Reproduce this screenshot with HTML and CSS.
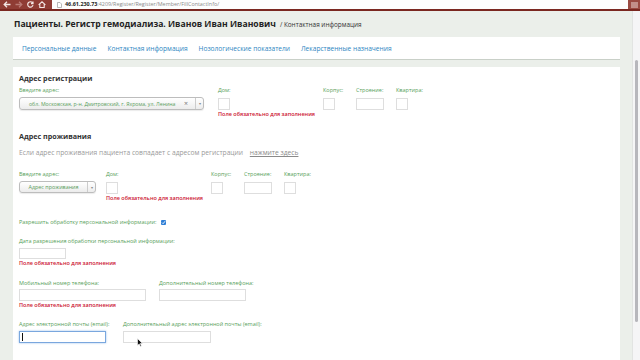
FILE: index.html
```html
<!DOCTYPE html>
<html lang="ru">
<head>
    <meta charset="UTF-8">
    <meta name="viewport" content="width=device-width, initial-scale=1.0">
    <title>Контактная информация</title>
    <link rel="stylesheet" href="styles.css">
</head>
<body>
    <!-- Browser toolbar -->
    <div class="chrome">
        <div class="chrome-nav">
            <svg width="8" height="7" viewBox="0 0 8 7"><path d="M7.5 3.5H1.5M4 0.8L1.2 3.5L4 6.2" fill="none" stroke="#f3e6e4" stroke-width="1.3"/></svg>
            <svg width="8" height="7" viewBox="0 0 8 7"><path d="M0.5 3.5H6.5M4 0.8L6.8 3.5L4 6.2" fill="none" stroke="#b97a74" stroke-width="1.3"/></svg>
            <svg width="7" height="7" viewBox="0 0 7 7"><path d="M5.8 2.2A2.7 2.7 0 1 0 6 4.2M6 0.6V2.6H4" fill="none" stroke="#f3e6e4" stroke-width="1.2"/></svg>
            <svg width="8" height="7" viewBox="0 0 8 7"><path d="M0.6 3.8L4 0.8L7.4 3.8M1.8 3V6.5H6.2V3" fill="none" stroke="#f3e6e4" stroke-width="1.1"/></svg>
        </div>
        <div class="omnibox">
            <svg class="page-icon" width="5" height="6" viewBox="0 0 5 6"><path d="M0.5 0.5H3L4.5 2V5.5H0.5Z" fill="#fff" stroke="#999" stroke-width="0.7"/></svg>
            <span class="host">46.61.230.73</span><span class="url-path">:4209/Register/Register/Member/FillContactInfo/</span>
        </div>
        <div class="chrome-menu">
            <svg width="7" height="6" viewBox="0 0 7 6"><path d="M0 1H7M0 3H7M0 5H7" stroke="#e9d3d0" stroke-width="1"/></svg>
        </div>
    </div>

    <div class="window">
        <div class="page">
            <header class="page-head">
                <h1>Пациенты. Регистр гемодиализа. Иванов Иван Иванович</h1>
                <span class="crumb">/ Контактная информация</span>
            </header>

            <nav class="tabs">
                <a href="#">Персональные данные</a>
                <a href="#">Контактная информация</a>
                <a href="#">Нозологические показатели</a>
                <a href="#">Лекарственные назначения</a>
            </nav>

            <main class="card">
                <h2 class="first">Адрес регистрации</h2>
                <div class="addr-row reg">
                    <div class="field">
                        <label>Введите адрес:</label>
                        <div class="select select-wide">
                            <span class="select-text">обл. Московская, р-н. Дмитровский, г. Яхрома, ул. Ленина</span>
                            <span class="select-clear">&times;</span>
                            <span class="select-arrow">&#9662;</span>
                        </div>
                    </div>
                    <div class="field">
                        <label>Дом:</label>
                        <div class="box box-sq"></div>
                        <span class="error">Поле обязательно для заполнения</span>
                    </div>
                    <div class="field">
                        <label>Корпус:</label>
                        <div class="box box-sq"></div>
                    </div>
                    <div class="field">
                        <label>Строение:</label>
                        <div class="box box-mid"></div>
                    </div>
                    <div class="field">
                        <label>Квартира:</label>
                        <div class="box box-sq"></div>
                    </div>
                </div>

                <h2 class="second">Адрес проживания</h2>
                <p class="hint">Если адрес проживания пациента совпадает с адресом регистрации <a href="#">нажмите здесь</a></p>
                <div class="addr-row live">
                    <div class="field">
                        <label>Введите адрес:</label>
                        <div class="select select-short">
                            <span class="select-text">Адрес проживания</span>
                            <span class="select-arrow">&#9662;</span>
                        </div>
                    </div>
                    <div class="field">
                        <label>Дом:</label>
                        <div class="box box-sq"></div>
                        <span class="error">Поле обязательно для заполнения</span>
                    </div>
                    <div class="field">
                        <label>Корпус:</label>
                        <div class="box box-sq"></div>
                    </div>
                    <div class="field">
                        <label>Строение:</label>
                        <div class="box box-mid"></div>
                    </div>
                    <div class="field">
                        <label>Квартира:</label>
                        <div class="box box-sq"></div>
                    </div>
                </div>

                <div class="consent">
                    <label>Разрешить обработку персональной информации:</label>
                    <span class="checkbox">
                        <svg width="5" height="5" viewBox="0 0 5 5"><path d="M1 2.6L2.1 3.7L4.1 1.2" fill="none" stroke="#fff" stroke-width="0.9"/></svg>
                    </span>
                </div>

                <div class="field block date">
                    <label>Дата разрешения обработки персональной информации:</label>
                    <div class="box box-date"></div>
                    <span class="error">Поле обязательно для заполнения</span>
                </div>

                <div class="pair phones">
                    <div class="field">
                        <label>Мобильный номер телефона:</label>
                        <div class="box box-phone"></div>
                        <span class="error">Поле обязательно для заполнения</span>
                    </div>
                    <div class="field">
                        <label>Дополнительный номер телефона:</label>
                        <div class="box box-phone2"></div>
                    </div>
                </div>

                <div class="pair emails">
                    <div class="field">
                        <label>Адрес электронной почты (email):</label>
                        <div class="box box-email focused"><span class="caret"></span></div>
                    </div>
                    <div class="field">
                        <label>Дополнительный адрес электронной почты (email):</label>
                        <div class="box box-email"></div>
                    </div>
                </div>
            </main>
        </div>

        <div class="scrollbar"><div class="thumb"></div></div>
    </div>

    <!-- mouse pointer -->
    <svg class="pointer" width="6" height="9" viewBox="0 0 6 9"><path d="M0.5 0.5V7.5L2.2 5.9L3.4 8.5L4.4 8L3.3 5.5H5.5Z" fill="#111" stroke="#fff" stroke-width="0.6"/></svg>
</body>
</html>
```

FILE: styles.css
```css
/* General styles */
body {
    font-family: 'Open Sans', 'Liberation Sans', sans-serif;
    background-color: #ebefea; /* pale sage */
    color: #333;
    margin: 0;
    padding: 0;
    height: 360px;
    overflow: hidden;
    position: relative;
}

/* Browser toolbar */
.chrome {
    display: flex;
    height: 9px;
    background-color: #8f3c34;
    border-bottom: 2px solid #7a2720;
}

.chrome-nav {
    display: flex;
    align-items: center;
    gap: 4px;
    padding: 0 0 0 3px;
    width: 49px;
}

.omnibox {
    flex: 1;
    display: flex;
    align-items: center;
    background-color: #fdfdfd;
    font-size: 5.4px;
    line-height: 9px;
    padding-left: 5px;
}

.page-icon {
    margin-right: 3px;
}

.host {
    color: #222;
    font-weight: 700;
}

.url-path {
    color: #8a8a8a;
}

.chrome-menu {
    width: 12px;
    display: flex;
    align-items: center;
    justify-content: center;
    background-color: #9a4a42;
}

/* Window body */
.window {
    display: flex;
    height: 349px;
}

.page {
    flex: 1;
    padding: 0 12px 0 13px;
    overflow: hidden;
}

.scrollbar {
    width: 8px;
    background-color: #f5f5f6;
    border-left: 1px solid #e2e4e2;
    box-sizing: border-box;
    padding: 49px 0 0 2px;
}

.thumb {
    width: 3px;
    height: 262px;
    background-color: #b7b7bc;
    border-radius: 2px;
}

/* Page header */
.page-head {
    display: flex;
    align-items: baseline;
    padding: 6px 0 0 1px;
    height: 14px;
}

.page-head h1 {
    margin: 0;
    font-size: 8.6px;
    line-height: 14px;
    font-weight: 700;
    color: #222;
}

.crumb {
    font-size: 6.4px;
    color: #333;
    margin-left: 4px;
}

/* Tabs */
.tabs {
    display: flex;
    gap: 11px;
    background-color: #fff;
    height: 22px;
    align-items: center;
    padding-left: 9px;
    margin-top: 6px;
    border-bottom: 1px solid #c9d0c8;
}

.tabs a {
    color: #2d86c1;
    text-decoration: none;
    font-size: 6.6px;
}

/* Main card */
.card {
    background-color: #fff;
    margin-top: 7px;
    padding: 0 0 40px 6px;
    height: 400px;
}

.card h2 {
    margin: 0;
    font-size: 7.2px;
    line-height: 10px;
    font-weight: 700;
    color: #333;
}

.card h2.first {
    padding-top: 6px;
}

.card h2.second {
    margin-top: 13px;
}

label {
    display: block;
    font-size: 5.5px;
    line-height: 8px;
    color: #57a05a;
}

.field {
    display: flex;
    flex-direction: column;
    align-items: flex-start;
}

.error {
    font-size: 5.5px;
    line-height: 8px;
    color: #cc1330;
    font-weight: 600;
    white-space: nowrap;
}

/* Address rows */
.addr-row {
    display: grid;
    grid-template-columns: 199px 105px 33px 40px 40px;
}

.addr-row.reg {
    margin-top: 3px;
}

.addr-row.live {
    grid-template-columns: 87px 105px 33px 40px 40px;
    margin-top: 12px;
}

.box {
    border: 1px solid #dedede;
    background-color: #fff;
    box-sizing: border-box;
    height: 12px;
    margin-top: 3px;
}

.box-sq {
    width: 12px;
    margin-top: 4px;
}

.box-mid {
    width: 28px;
    margin-top: 4px;
}

.select {
    display: flex;
    align-items: center;
    margin-top: 3px;
    height: 13px;
    box-sizing: border-box;
    border: 1px solid #bdbdbd;
    border-radius: 3px;
    background: linear-gradient(#ffffff, #ececec);
    box-shadow: 0 1px 1px rgba(0, 0, 0, 0.08);
    font-size: 5.2px;
    color: #5a9e5c;
}

.select-wide {
    width: 185px;
}

.select-short {
    width: 77px;
    height: 12px;
}

.select-text {
    flex: 1;
    padding-left: 9px;
    white-space: nowrap;
    overflow: hidden;
}

.select-short .select-text {
    padding-left: 0;
    text-align: center;
    font-size: 5.4px;
}

.select-clear {
    color: #777;
    font-size: 7px;
    margin-right: 7px;
}

.select-arrow {
    width: 7px;
    height: 100%;
    border-left: 1px solid #ccc;
    color: #888;
    font-size: 4px;
    display: flex;
    align-items: center;
    justify-content: center;
}

.hint {
    margin: 7px 0 0;
    font-size: 6.7px;
    line-height: 10px;
    color: #9a9a9a;
}

.hint a {
    color: #8a8a8a;
    margin-left: 5px;
    text-decoration: underline;
}

/* Consent */
.consent {
    display: flex;
    align-items: center;
    margin-top: 16px;
}

.checkbox {
    display: inline-flex;
    width: 5px;
    height: 5px;
    margin-left: 5px;
    background-color: #2f7fd6;
    border-radius: 1px;
}

.date {
    margin-top: 11px;
}

.box-date {
    width: 47px;
    height: 11px;
    margin-top: 3px;
}

/* Phone and email rows */
.pair {
    display: grid;
    grid-template-columns: 140px 160px;
}

.phones {
    margin-top: 12px;
}

.phones .box {
    margin-top: 2px;
}

.box-phone {
    width: 127px;
}

.box-phone2 {
    width: 87px;
}

.emails {
    margin-top: 11px;
    grid-template-columns: 104px 160px;
}

.box-email {
    width: 88px;
}

.box-email.focused {
    width: 87px;
    border-color: #7aa7de;
    box-shadow: 0 0 2px #9cc1ec;
    display: flex;
    align-items: center;
    padding-left: 2px;
}

.caret {
    width: 1px;
    height: 8px;
    background-color: #111;
}

.pointer {
    position: absolute;
    left: 137px;
    top: 338px;
}
```
